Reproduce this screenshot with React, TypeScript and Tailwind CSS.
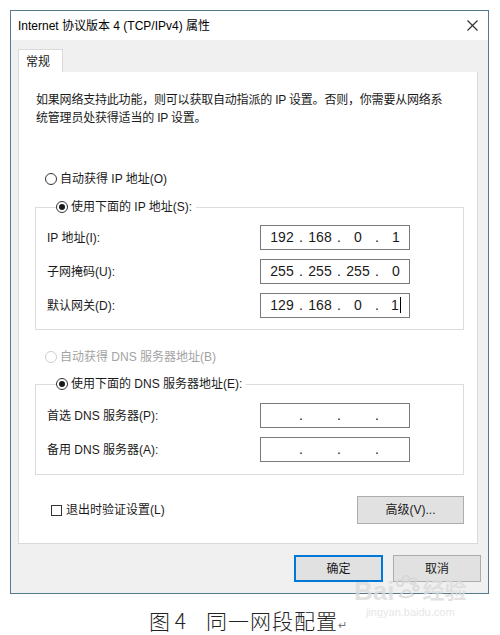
import React from 'react';

const font = "font-['Liberation_Sans','Noto_Sans_CJK_SC',sans-serif]";

const Radio = ({ checked = false, disabled = false }: { checked?: boolean; disabled?: boolean }) => (
  <span
    className={`w-[12px] h-[12px] rounded-full border bg-white flex items-center justify-center shrink-0 ${
      disabled ? 'border-[#cfcfcf]' : 'border-[#333333]'
    }`}
  >
    {checked && <span className="w-[6px] h-[6px] rounded-full bg-[#1a1a1a]" />}
  </span>
);

const IpBox = ({ parts, caret = false }: { parts: string[]; caret?: boolean }) => (
  <div className="w-[150px] h-[25px] border border-[#7a7a7a] bg-white flex items-center pl-[8px] text-[14px] text-[#1a1a1a]">
    {parts.map((p, i) => (
      <React.Fragment key={i}>
        <span className="w-[26px] text-center relative">
          {p}
          {caret && i === 3 && <span className="inline-block w-px h-[16px] bg-black align-middle ml-[1px] -mt-[2px]" />}
        </span>
        {i < 3 && <span className="w-[12px] text-center">.</span>}
      </React.Fragment>
    ))}
  </div>
);

const Row = ({ label, children }: { label: string; children: React.ReactNode }) => (
  <div className="flex items-center h-[25px]">
    <span className="w-[213px] text-[12px] text-[#1a1a1a]">{label}</span>
    {children}
  </div>
);

export default function App() {
  return (
    <div className={`w-[500px] h-[635px] bg-white relative overflow-hidden ${font}`}>
      <div className="pt-[10px] pl-[10px]">
        <div className="w-[479px] h-[584px] border border-[#55798f] flex flex-col shadow-[inset_0_0_0_1px_#e6f3fa]">
          {/* title bar */}
          <div className="h-[29px] bg-white flex items-center justify-between pl-[7px] pr-[10px]">
            <span className="text-[12px] text-black">Internet 协议版本 4 (TCP/IPv4) 属性</span>
            <svg width="11" height="11" viewBox="0 0 11 11">
              <path d="M0.5 0.5 L10.5 10.5 M10.5 0.5 L0.5 10.5" stroke="#333" strokeWidth="1.2" />
            </svg>
          </div>

          {/* body */}
          <div className="flex-1 bg-[#f0f0f0] flex flex-col">
            <div className="pl-[7px] pr-[10px] pt-[9px]">
              <div className="w-[45px] h-[24px] bg-white border border-[#d9d9d9] border-b-0 text-[12px] text-[#1a1a1a] pl-[7px] flex items-center">
                常规
              </div>
              <div className="h-[472px] bg-white border border-[#d9d9d9] border-t-0 -mt-px flex flex-col">
                <p className="mt-[19px] ml-[17px] text-[12px] leading-[18px] text-[#1a1a1a] tracking-[-0.2px]">
                  如果网络支持此功能，则可以获取自动指派的 IP 设置。否则，你需要从网络系
                  <br />
                  统管理员处获得适当的 IP 设置。
                </p>

                <div className="mt-[43px] ml-[26px] h-[18px] flex items-center gap-[3px] text-[12px] text-[#1a1a1a]">
                  <Radio />
                  <span>自动获得 IP 地址(O)</span>
                </div>

                <fieldset className="m-0 p-0 mt-[10px] ml-[16px] w-[429px] border border-[#dcdcdc] px-[11px] pb-[11px]">
                  <legend className="ml-[9px] pr-[4px] h-[18px] flex items-center gap-[3px] text-[12px] text-[#1a1a1a]">
                    <Radio checked />
                    <span>使用下面的 IP 地址(S):</span>
                  </legend>
                  <div className="mt-[9px] flex flex-col gap-[9px]">
                    <Row label="IP 地址(I):">
                      <IpBox parts={['192', '168', '0', '1']} />
                    </Row>
                    <Row label="子网掩码(U):">
                      <IpBox parts={['255', '255', '255', '0']} />
                    </Row>
                    <Row label="默认网关(D):">
                      <IpBox parts={['129', '168', '0', '1']} caret />
                    </Row>
                  </div>
                </fieldset>

                <div className="mt-[18px] ml-[26px] h-[18px] flex items-center gap-[3px] text-[12px] text-[#a3a3a3]">
                  <Radio disabled />
                  <span>自动获得 DNS 服务器地址(B)</span>
                </div>

                <fieldset className="m-0 p-0 ml-[16px] mt-[9px] w-[429px] border border-[#dcdcdc] px-[11px] pb-[12px]">
                  <legend className="ml-[9px] pr-[4px] h-[18px] flex items-center gap-[3px] text-[12px] text-[#1a1a1a]">
                    <Radio checked />
                    <span>使用下面的 DNS 服务器地址(E):</span>
                  </legend>
                  <div className="mt-[10px] flex flex-col gap-[9px]">
                    <Row label="首选 DNS 服务器(P):">
                      <IpBox parts={['', '', '', '']} />
                    </Row>
                    <Row label="备用 DNS 服务器(A):">
                      <IpBox parts={['', '', '', '']} />
                    </Row>
                  </div>
                </fieldset>

                <div className="mt-[21px] ml-[16px] w-[429px] flex items-center justify-between">
                  <div className="pl-[16px] flex items-center gap-[4px] text-[12px] text-[#1a1a1a]">
                    <span className="w-[11px] h-[11px] border border-[#333333] bg-white" />
                    <span>退出时验证设置(L)</span>
                  </div>
                  <button className="w-[107px] h-[28px] bg-[#e1e1e1] border border-[#adadad] text-[12px] text-[#1a1a1a]">
                    高级(V)...
                  </button>
                </div>
              </div>
            </div>

            <div className="mt-[11px] pr-[7px] flex justify-end gap-[10px]">
              <button className="w-[89px] h-[27px] bg-[#e1e1e1] border-2 border-[#0078d7] text-[12px] text-[#1a1a1a]">
                确定
              </button>
              <button className="w-[88px] h-[27px] bg-[#e1e1e1] border border-[#adadad] text-[12px] text-[#1a1a1a]">
                取消
              </button>
            </div>
          </div>
        </div>
      </div>

      {/* caption */}
      <div className="mt-[13px] h-[26px] flex justify-center items-center text-[21px] leading-[26px] text-[#222] font-['Noto_Sans_CJK_SC',sans-serif] font-light pr-[4px]">
        <span>图 4</span>
        <span className="ml-[20px] tracking-[1px]">同一网段配置</span>
        <span className="text-[11px] leading-[11px] text-[#777] mt-[8px]">↵</span>
      </div>

      {/* baidu watermark */}
      <div className="absolute left-[354px] top-[578px] flex flex-col items-center opacity-80 pointer-events-none">
        <div className="flex items-center text-[#dcdcdc]">
          <span className="text-[26px] font-bold leading-none font-['Liberation_Sans',sans-serif]">Bai</span>
          <svg width="26" height="26" viewBox="0 0 26 26" className="-mt-[6px]">
            <g fill="none" stroke="#d6d6d6" strokeWidth="2">
              <circle cx="6" cy="8" r="3" />
              <circle cx="12" cy="4" r="3" />
              <circle cx="19" cy="6" r="3" />
              <circle cx="22" cy="13" r="2.5" />
              <path d="M6 21 Q12 10 19 20 Q13 24 6 21 Z" />
            </g>
          </svg>
          <span className="text-[22px] font-bold leading-none ml-[2px]">经验</span>
        </div>
        <span className="text-[11px] leading-[13px] text-[#e2e2e2] font-['Liberation_Sans',sans-serif] mt-[2px]">jingyan.baidu.com</span>
      </div>
    </div>
  );
}
